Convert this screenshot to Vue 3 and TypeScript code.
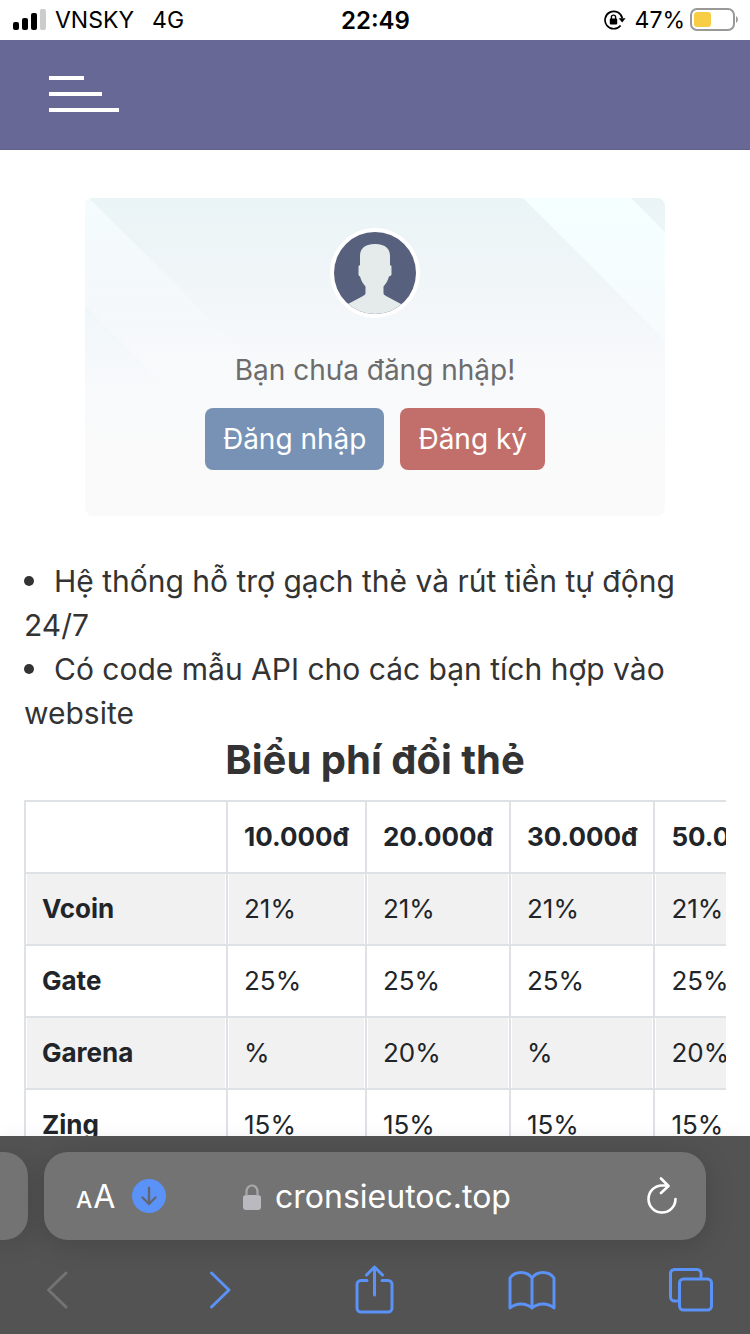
<script setup lang="ts">
interface FeeRow {
  name: string
  fees: string[]
}

const amounts: string[] = ['10.000đ', '20.000đ', '30.000đ', '50.000đ']

const rows: FeeRow[] = [
  { name: 'Vcoin', fees: ['21%', '21%', '21%', '21%'] },
  { name: 'Gate', fees: ['25%', '25%', '25%', '25%'] },
  { name: 'Garena', fees: ['%', '20%', '%', '20%'] },
  { name: 'Zing', fees: ['15%', '15%', '15%', '15%'] },
]

const notes: string[] = [
  'Hệ thống hỗ trợ gạch thẻ và rút tiền tự động 24/7',
  'Có code mẫu API cho các bạn tích hợp vào website',
]
</script>

<template>
  <div class="screen">
    <div class="status">
      <div class="status-side">
        <svg class="signal" width="34" height="22" viewBox="0 0 34 22" aria-hidden="true">
          <rect x="0" y="13" width="6" height="8" rx="2" />
          <rect x="9" y="9" width="6" height="12" rx="2" />
          <rect x="18" y="4" width="6" height="17" rx="2" />
          <rect x="27" y="0" width="6" height="21" rx="2" fill="#ccc" />
        </svg>
        <span class="carrier">VNSKY</span>
        <span>4G</span>
      </div>
      <span class="clock">22:49</span>
      <div class="status-side status-right">
        <svg class="rotation" width="22" height="20" viewBox="0 0 22 20" aria-hidden="true">
          <path d="M16.600 15.400A8.700 8.700 0 1 1 18.300 8.500" fill="none" stroke="#000" stroke-width="1.700" />
          <path d="M14.600 8.200h7L18.200 12.600z" />
          <rect x="5.800" y="8.600" width="7.400" height="5.800" rx="1" />
          <path d="M7.400 9V7.200a2.100 2.100 0 0 1 4.200 0V9" fill="none" stroke="#000" stroke-width="1.400" />
        </svg>
        <span>47%</span>
        <svg class="battery" width="48" height="24" viewBox="0 0 48 24" aria-hidden="true">
          <rect x="1" y="1" width="43" height="21" rx="6" fill="none" stroke="#999" stroke-width="2" />
          <rect x="4" y="4" width="17" height="15" rx="3" fill="#f6cd45" />
          <path d="M46 8c2.500 1.500 2.500 5.500 0 7z" fill="#999" />
        </svg>
      </div>
    </div>

    <header class="topbar">
      <button class="menu" type="button" aria-label="Menu">
        <span class="bar short"></span>
        <span class="bar medium"></span>
        <span class="bar"></span>
      </button>
    </header>

    <main class="page">
      <section class="card">
        <svg class="rays" viewBox="0 0 580 318" preserveAspectRatio="none" aria-hidden="true">
          <defs>
            <linearGradient id="ray-left" x1="0" y1="0" x2="0" y2="1">
              <stop offset="0" stop-color="#f5fcfd" />
              <stop offset="1" stop-color="#f9fafc" stop-opacity="0" />
            </linearGradient>
            <linearGradient id="ray-right" x1="0" y1="0" x2="0" y2="1">
              <stop offset="0" stop-color="#f4ffff" />
              <stop offset="1" stop-color="#f7fbfc" />
            </linearGradient>
            <linearGradient id="ray-low" x1="0" y1="0" x2="0" y2="1">
              <stop offset="0" stop-color="#eff6fa" />
              <stop offset="1" stop-color="#f8fafc" stop-opacity="0" />
            </linearGradient>
          </defs>
          <path d="M0 0H4L204 200H92L0 108z" fill="url(#ray-left)" />
          <path d="M0 108L110 218H0z" fill="url(#ray-low)" />
          <path d="M438 0H546L580 34V142z" fill="url(#ray-right)" />
        </svg>
        <svg class="avatar" width="90" height="90" viewBox="0 0 90 90" role="img" aria-label="Avatar">
          <defs>
            <clipPath id="face"><circle cx="45" cy="45" r="41" /></clipPath>
          </defs>
          <circle cx="45" cy="45" r="45" fill="#fff" />
          <circle cx="45" cy="45" r="41" fill="#57607d" />
          <path clip-path="url(#face)" fill="#e5eaea" d="M45 16c11 0 15 5 15 12v9l1.500 1v8c0 1.500-1 2-2.500 2.500-1 4-3 7-5.500 10V65c0 1.500 1 2 2.500 3L71 76v14H18V76l15-8c1.500-1 2.500-1.500 2.500-3v-6.500c-2.500-3-4.500-6-5.500-10-1-.5-1.500-1-1.500-2.500v-8l1.500-1v-9c0-7 4-12 15-12z" />
        </svg>
        <p class="message">Bạn chưa đăng nhập!</p>
        <div class="actions">
          <button class="btn login" type="button">Đăng nhập</button>
          <button class="btn register" type="button">Đăng ký</button>
        </div>
      </section>

      <ul class="notes">
        <li v-for="note in notes" :key="note">{{ note }}</li>
      </ul>

      <h1 class="title">Biểu phí đổi thẻ</h1>

      <div class="table-wrap">
        <table class="fees">
          <thead>
            <tr>
              <th class="name"></th>
              <th v-for="amount in amounts" :key="amount" scope="col">{{ amount }}</th>
            </tr>
          </thead>
          <tbody>
            <tr v-for="row in rows" :key="row.name">
              <th class="name" scope="row">{{ row.name }}</th>
              <td v-for="(fee, i) in row.fees" :key="i">{{ fee }}</td>
            </tr>
          </tbody>
        </table>
      </div>
    </main>

    <footer class="browser">
      <div class="address-row">
        <div class="tab-peek"></div>
        <div class="address">
          <div class="address-tools">
            <button class="icon-btn text-size" type="button" aria-label="Cỡ chữ">
              <span class="small-a">A</span><span class="big-a">A</span>
            </button>
            <button class="icon-btn" type="button" aria-label="Tải về">
              <svg width="34" height="34" viewBox="0 0 34 34">
                <circle cx="17" cy="17" r="17" fill="#5a92f7" />
                <path d="M17 9v16M10.500 18.500L17 25l6.500-6.500" fill="none" stroke="#62666e" stroke-width="2.400" stroke-linecap="round" stroke-linejoin="round" />
              </svg>
            </button>
          </div>
          <a class="url" href="#">
            <svg width="18" height="26" viewBox="0 0 18 26" aria-hidden="true">
              <rect x="0" y="11" width="18" height="15" rx="3" fill="#bab9bf" />
              <path d="M3.500 12V7.500a5.500 6 0 0 1 11 0V12" fill="none" stroke="#a9a9ac" stroke-width="2.200" />
            </svg>
            <span>cronsieutoc.top</span>
          </a>
          <button class="icon-btn reload" type="button" aria-label="Tải lại">
            <svg width="32" height="38" viewBox="0 0 32 38" fill="none" stroke="#fff" stroke-width="2.600" stroke-linecap="round" stroke-linejoin="round">
              <path d="M21.500 8.500H16A13.500 13.500 0 1 0 29.500 22M15 1.500l7.500 7.500L15 16" />
            </svg>
          </button>
        </div>
      </div>
      <nav class="toolbar">
        <button class="icon-btn" type="button" aria-label="Quay lại" disabled>
          <svg width="48" height="50" viewBox="0 0 48 50" fill="none" stroke="#737373" stroke-width="3" stroke-linecap="round" stroke-linejoin="round"><path d="M32 9L14.500 26 32 43" /></svg>
        </button>
        <button class="icon-btn" type="button" aria-label="Tiếp">
          <svg width="48" height="50" viewBox="0 0 48 50" fill="none" stroke="#5a92f7" stroke-width="3" stroke-linecap="round" stroke-linejoin="round"><path d="M19.500 9L37 26 19.500 43" /></svg>
        </button>
        <button class="icon-btn" type="button" aria-label="Chia sẻ">
          <svg width="48" height="50" viewBox="0 0 48 50" fill="none" stroke="#5a92f7" stroke-width="3" stroke-linecap="round" stroke-linejoin="round"><path d="M17 16.500h-6a4 4 0 0 0-4 4V44a4 4 0 0 0 4 4h27a4 4 0 0 0 4-4V20.500a4 4 0 0 0-4-4h-6M24.500 31V3.500M16.500 11l8-8 8 8" /></svg>
        </button>
        <button class="icon-btn" type="button" aria-label="Dấu trang">
          <svg width="48" height="50" viewBox="0 0 48 50" fill="none" stroke="#5a92f7" stroke-width="3" stroke-linecap="round" stroke-linejoin="round"><path d="M24 14C19 6.500 7 6.500 2 14v30c6-5.500 16-5.500 22 0 6-5.500 16-5.500 22 0V14C41 6.500 29 6.500 24 14zM24 14v30" /></svg>
        </button>
        <button class="icon-btn" type="button" aria-label="Các tab">
          <svg width="48" height="50" viewBox="0 0 48 50" fill="none" stroke="#5a92f7" stroke-width="3"><rect x="13.500" y="15" width="32" height="31" rx="4" /><path d="M13.500 37h-5a4 4 0 0 1-4-4V9.500a4 4 0 0 1 4-4H31a4 4 0 0 1 4 4V15" /></svg>
        </button>
      </nav>
    </footer>
  </div>
</template>

<style>
body {
  margin: 0;
  background: #fff;
}
</style>

<style scoped>
* {
  box-sizing: border-box;
}

.screen {
  display: flex;
  flex-direction: column;
  height: 100vh;
  overflow: hidden;
  font-family: Inter, "Liberation Sans", sans-serif;
  color: #333;
}

button {
  border: 0;
  padding: 0;
  font: inherit;
  color: inherit;
  background: none;
  cursor: pointer;
}

.status {
  display: flex;
  align-items: center;
  flex: none;
  height: 40px;
  padding: 0 12px 0 13px;
  font-size: 23px;
  line-height: 40px;
  color: #000;
}

.status-side {
  display: flex;
  flex: 1;
  align-items: center;
}

.status-right {
  justify-content: flex-end;
}

.carrier {
  margin: 0 18px 0 8px;
}

.clock {
  padding-top: 1px;
  font-size: 24px;
  font-weight: 600;
}

.rotation {
  margin-right: 9px;
}

.battery {
  margin-left: 5px;
}

.topbar {
  display: flex;
  align-items: center;
  flex: none;
  height: 110px;
  padding: 0 49px 2px;
  background: #676896;
  box-shadow: inset 0 -1px #5f608c;
}

.menu {
  display: flex;
  flex-direction: column;
  gap: 12px;
  width: 70px;
}

.bar {
  width: 100%;
  height: 4px;
  background: #fff;
}

.short {
  width: 50%;
}

.medium {
  width: 75%;
}

.page {
  flex: 1;
  min-height: 0;
  overflow: hidden;
  padding: 48px 24px 0;
}

.card {
  position: relative;
  display: flex;
  flex-direction: column;
  align-items: center;
  margin: 0 61px 43px;
  padding: 30px 0 46px;
  border-radius: 8px;
  overflow: hidden;
  background: linear-gradient(#eaf4f6, #f0f5f8 25%, #f7f9fb 50%, #fafafa 85%);
}

.rays {
  position: absolute;
  inset: 0;
  width: 100%;
  height: 100%;
}

.avatar,
.message,
.actions {
  position: relative;
}

.message {
  margin: 30px 0 16px;
  font-size: 28px;
  line-height: 44px;
  color: #6c6c6c;
}

.actions {
  display: flex;
  gap: 16px;
}

.btn {
  height: 62px;
  padding: 0 18px;
  border-radius: 8px;
  font-size: 28px;
  line-height: 60px;
  color: #fff;
}

.login {
  background: #7892b5;
}

.register {
  background: #c26f6c;
}

.notes {
  margin: 0;
  padding: 0;
  list-style: none;
  font-size: 30px;
  line-height: 44px;
}

.notes li::before {
  content: "";
  display: inline-block;
  width: 10px;
  height: 10px;
  margin-right: 20px;
  border-radius: 50%;
  background: #333;
  vertical-align: 6px;
}

.title {
  margin: 1px 0 16px;
  font-size: 40px;
  line-height: 48px;
  font-weight: 700;
  text-align: center;
}

.table-wrap {
  overflow-x: auto;
  scrollbar-width: none;
}

.fees {
  border-collapse: collapse;
  font-size: 26px;
  line-height: 38px;
  color: #212529;
  text-align: left;
  white-space: nowrap;
}

.fees th,
.fees td {
  height: 72px;
  padding: 16px;
  border: 2px solid #dee2e6;
}

.fees .name {
  min-width: 202px;
}

.fees tbody tr:nth-child(odd) > * {
  background: #f1f1f1;
  box-shadow: inset 1px 0 #fff, inset -1px 0 #fff;
}

.browser {
  flex: none;
  padding-top: 16px;
  background: #535353;
  box-shadow: 0 0 20px rgba(0, 0, 0, 0.05);
}

.address-row {
  display: flex;
  gap: 16px;
  height: 88px;
  padding-right: 44px;
}

.tab-peek {
  width: 28px;
  border-radius: 0 24px 24px 0;
  background: #737373;
  box-shadow: 0 4px 28px rgba(0, 0, 0, 0.16);
}

.address {
  display: grid;
  grid-template-columns: 1fr auto 1fr;
  flex: 1;
  align-items: center;
  padding: 0 28px 0 32px;
  border-radius: 24px;
  background: #737373;
  box-shadow: 0 4px 28px rgba(0, 0, 0, 0.16);
  color: #fff;
}

.address-tools {
  display: flex;
  align-items: center;
}

.icon-btn {
  display: flex;
  align-items: center;
}

.text-size {
  align-items: baseline;
  gap: 1px;
  margin-right: 17px;
}

.small-a {
  font-size: 23px;
  font-weight: 500;
}

.big-a {
  font-size: 32px;
}

.reload {
  justify-self: end;
}

.url {
  display: flex;
  align-items: center;
  gap: 14px;
  padding-top: 1px;
  font-size: 32px;
  line-height: 40px;
  color: #fff;
  text-decoration: none;
}

.toolbar {
  display: flex;
  justify-content: space-between;
  padding: 24px 36px 20px 34px;
}
</style>
